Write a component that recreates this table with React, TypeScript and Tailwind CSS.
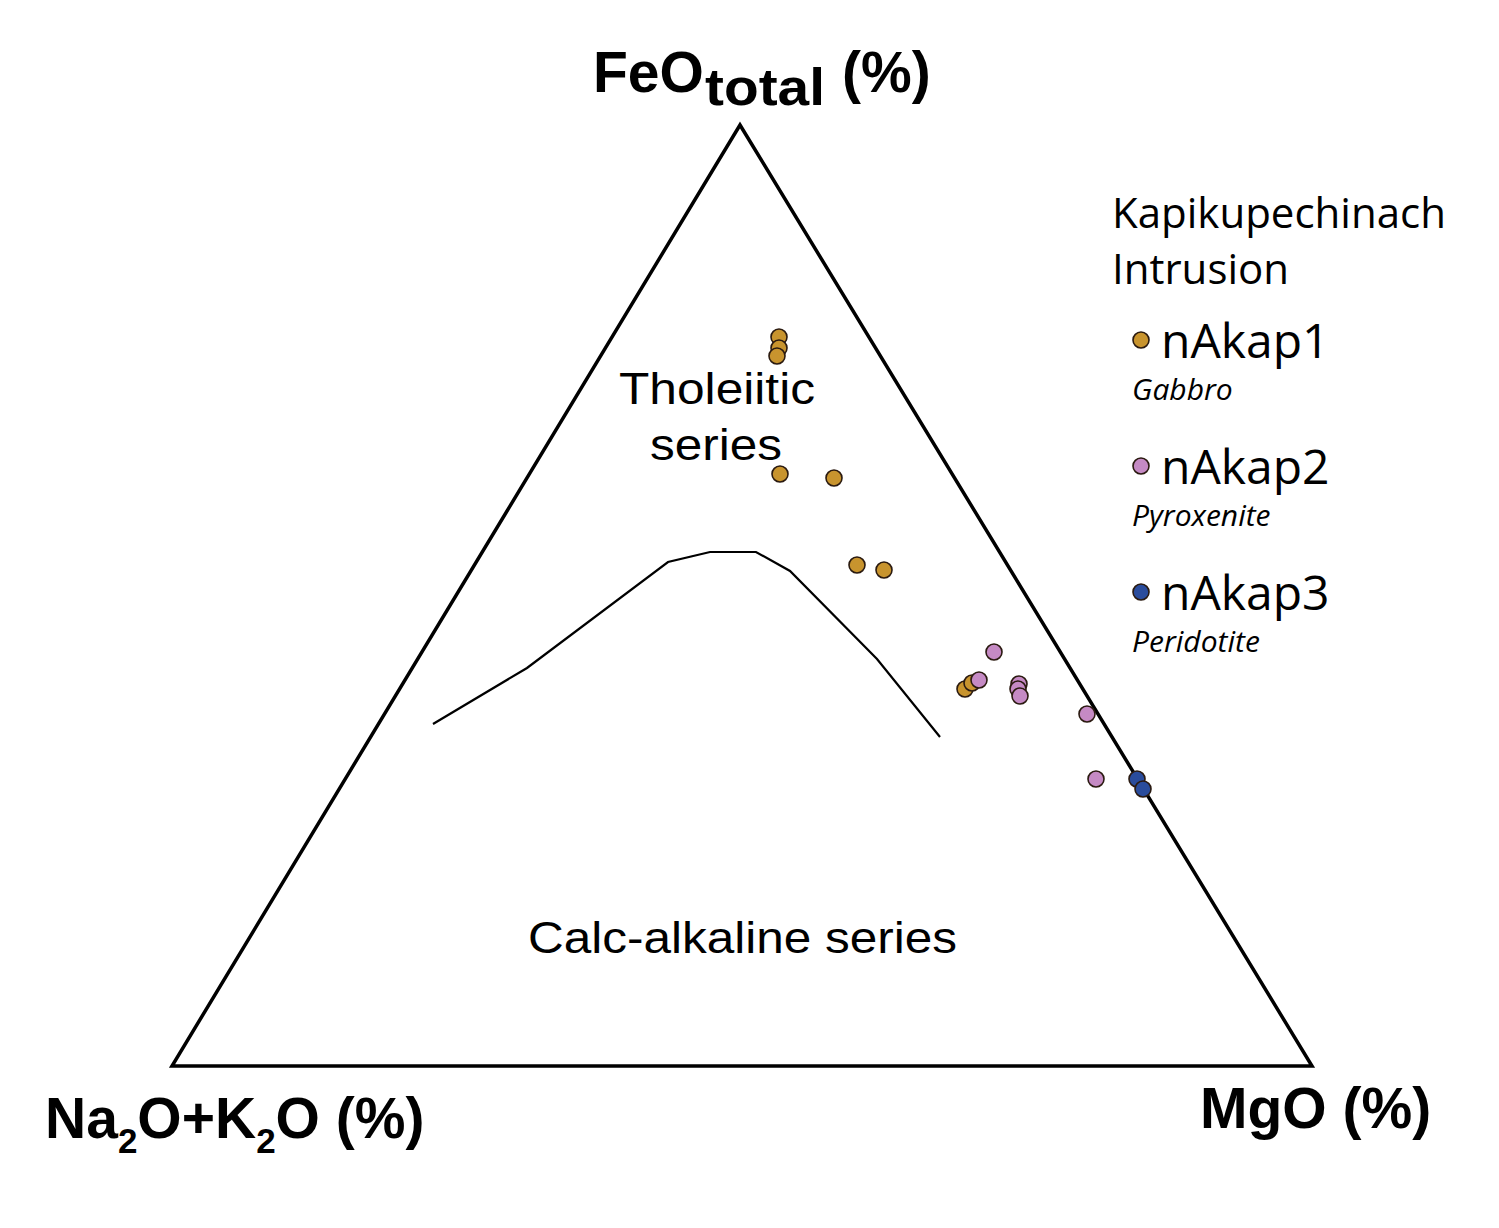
import React from "react";

type Pt = { x: number; y: number; c: string };

const GOLD = "#c8942e";
const LILAC = "#c58ac4";
const BLUE = "#2a4c9c";

const points: Pt[] = [
  { x: 779, y: 337, c: GOLD },
  { x: 779, y: 348, c: GOLD },
  { x: 777, y: 356, c: GOLD },
  { x: 780, y: 474, c: GOLD },
  { x: 834, y: 478, c: GOLD },
  { x: 857, y: 565, c: GOLD },
  { x: 884, y: 570, c: GOLD },
  { x: 965, y: 689, c: GOLD },
  { x: 972, y: 683, c: GOLD },
  { x: 979, y: 680, c: LILAC },
  { x: 994, y: 652, c: LILAC },
  { x: 1019, y: 684, c: LILAC },
  { x: 1018, y: 689, c: LILAC },
  { x: 1020, y: 696, c: LILAC },
  { x: 1087, y: 714, c: LILAC },
  { x: 1096, y: 779, c: LILAC },
  { x: 1137, y: 779, c: BLUE },
  { x: 1143, y: 789, c: BLUE },
];

const divider = "433,724 527,668 668,562 710,552 756,552 790,571 877,659 940,737";

const legend = [
  { name: "nAkap1", rock: "Gabbro", c: GOLD },
  { name: "nAkap2", rock: "Pyroxenite", c: LILAC },
  { name: "nAkap3", rock: "Peridotite", c: BLUE },
];

const arial = { fontFamily: '"Liberation Sans", Arial, sans-serif' };

export default function App() {
  return (
    <div className="relative w-[1499px] h-[1228px] bg-white overflow-hidden">
      <svg width="1499" height="1228" viewBox="0 0 1499 1228" className="block" style={arial}>
        <polygon points="740,125 172,1066 1312,1066" fill="none" stroke="#000" strokeWidth="3.5" strokeLinejoin="miter" />
        <polyline points={divider} fill="none" stroke="#000" strokeWidth="2.2" />

        {points.map((p, i) => (
          <circle key={i} cx={p.x} cy={p.y} r="8" fill={p.c} stroke="#2a1a10" strokeWidth="1.6" />
        ))}

        <text y="92" fontSize="57" fontWeight="700" fill="#000">
          <tspan x="593">FeO</tspan>
          <tspan x="705" y="105" fontSize="52" textLength="120" lengthAdjust="spacingAndGlyphs">total</tspan>
          <tspan x="842" y="92">(%)</tspan>
        </text>

        <text x="45" y="1138" fontSize="57" fontWeight="700" fill="#000">
          Na<tspan fontSize="35" dy="15">2</tspan>
          <tspan dy="-15">O+K</tspan>
          <tspan fontSize="35" dy="15">2</tspan>
          <tspan dy="-15">O (%)</tspan>
        </text>

        <text x="1200" y="1128" fontSize="57" fontWeight="700" fill="#000">
          MgO (%)
        </text>

        <text x="619" y="404" fontSize="45" textLength="196" lengthAdjust="spacingAndGlyphs" fill="#000">
          Tholeiitic
        </text>
        <text x="650" y="460" fontSize="45" textLength="132" lengthAdjust="spacingAndGlyphs" fill="#000">
          series
        </text>
        <text x="528" y="953" fontSize="45" textLength="429" lengthAdjust="spacingAndGlyphs" fill="#000">
          Calc-alkaline series
        </text>
      </svg>

      <div
        className="absolute left-[1112px] top-[184px] flex flex-col text-black"
        style={{ fontFamily: '"Open Sans", "Noto Sans", sans-serif' }}
      >
        <div className="text-[42px] leading-[56px]">Kapikupechinach</div>
        <div className="text-[42px] leading-[56px]">Intrusion</div>
        <div className="mt-[15px] flex flex-col gap-[28px]">
          {legend.map((l) => (
            <div key={l.name} className="flex flex-col">
              <div className="flex items-center gap-[11px] pl-[20px] h-[58px]">
                <svg width="18" height="18" viewBox="0 0 18 18">
                  <circle cx="9" cy="9" r="8" fill={l.c} stroke="#2a1a10" strokeWidth="1.6" />
                </svg>
                <span className="text-[48px] leading-none">{l.name}</span>
              </div>
              <div className="pl-[20px] text-[30px] leading-[40px] italic">{l.rock}</div>
            </div>
          ))}
        </div>
      </div>
    </div>
  );
}
